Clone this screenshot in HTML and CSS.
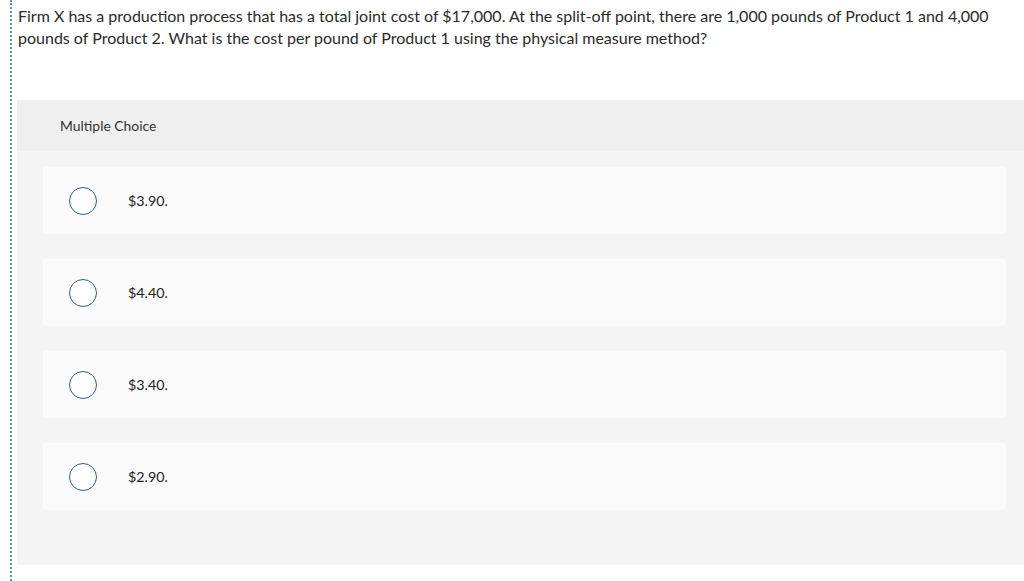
FILE: index.html
```html
<!DOCTYPE html>
<html>
<head>
<meta charset="utf-8">
<link rel="stylesheet" href="styles.css">
</head>
<body>
<div class="question">
  <p class="prompt">Firm X has a production process that has a total joint cost of $17,000. At the split-off point, there are 1,000 pounds of Product 1 and 4,000 pounds of Product 2. What is the cost per pound of Product 1 using the physical measure method?</p>
  <div class="panel">
    <div class="panel-head">Multiple Choice</div>
    <div class="panel-body">
      <div class="option"><span class="radio"></span><span class="label">$3.90.</span></div>
      <div class="option"><span class="radio"></span><span class="label">$4.40.</span></div>
      <div class="option"><span class="radio"></span><span class="label">$3.40.</span></div>
      <div class="option"><span class="radio"></span><span class="label">$2.90.</span></div>
    </div>
  </div>
</div>
</body>
</html>
```
FILE: styles.css
```css
html, body {
  margin: 0;
  padding: 0;
  background: #ffffff;
}
body {
  font-family: "Lato", "Open Sans", sans-serif;
  color: #222222;
  overflow: hidden;
}
.question {
  margin-left: 10px;
  border-left: 2px dotted #5b8fd6;
  padding-left: 5px;
  min-height: 581px;
  box-sizing: border-box;
}
.prompt {
  margin: 0;
  padding: 5px 25px 0 1px;
  font-size: 16px;
  line-height: 22px;
  color: #2a2a2a;
}
.panel {
  margin-top: 51px;
  background: #f4f4f4;
  border-radius: 0 0 0 3px;
}
.panel-head {
  height: 51px;
  box-sizing: border-box;
  background: #efefef;
  padding-left: 43px;
  display: flex;
  align-items: center;
  font-size: 13.9px;
  color: #333333;
}
.panel-body {
  padding: 16px 18px 55px 26px;
  display: flex;
  flex-direction: column;
  gap: 25px;
}
.option {
  height: 67px;
  background: #fafafa;
  border-radius: 3px;
  display: flex;
  align-items: center;
  padding-left: 26px;
}
.radio {
  width: 28px;
  height: 28px;
  box-sizing: border-box;
  border: 1.5px solid #2d5d8f;
  border-radius: 50%;
  background: #ffffff;
  flex: none;
}
.label {
  margin-left: 31px;
  font-size: 14.3px;
  color: #222222;
}
```
